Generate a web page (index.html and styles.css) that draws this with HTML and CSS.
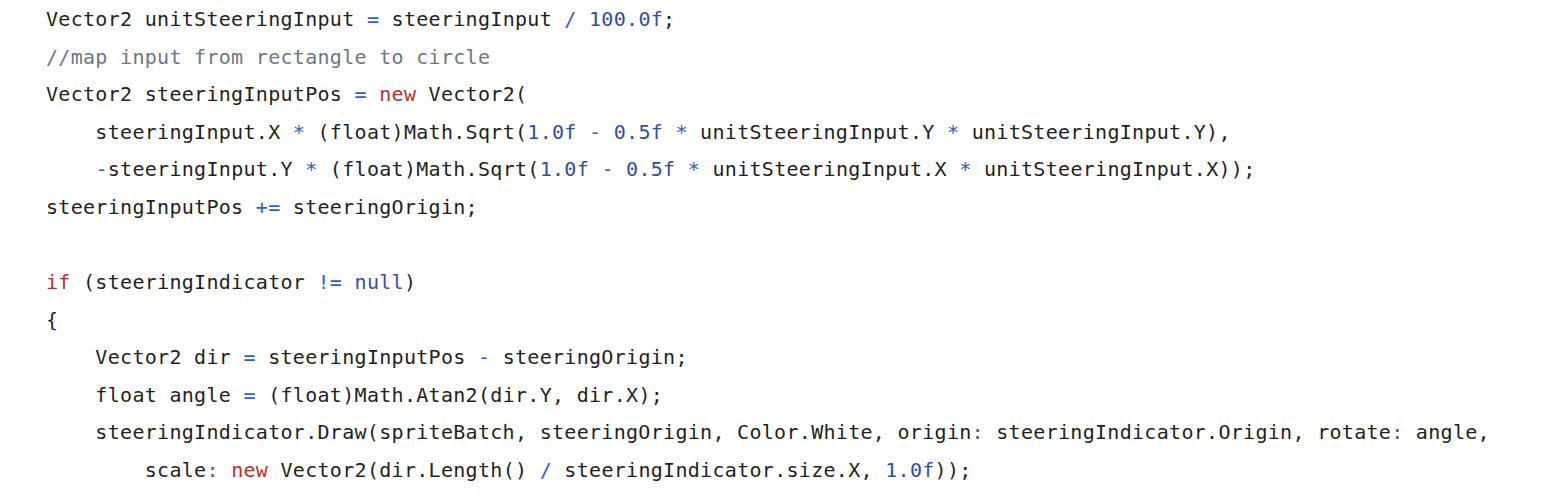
FILE: index.html
```html
<!DOCTYPE html>
<html>
<head>
<meta charset="utf-8">
<link rel="stylesheet" href="styles.css">
</head>
<body>
<pre class="code"><code><span class="line">Vector2 unitSteeringInput <span class="op">=</span> steeringInput <span class="op">/</span> <span class="num">100.0f</span>;</span>
<span class="line"><span class="cm">//map input from rectangle to circle</span></span>
<span class="line">Vector2 steeringInputPos <span class="op">=</span> <span class="kw">new</span> Vector2(</span>
<span class="line">    steeringInput.X <span class="op">*</span> (float)Math.Sqrt(<span class="num">1.0f</span> <span class="op">-</span> <span class="num">0.5f</span> <span class="op">*</span> unitSteeringInput.Y <span class="op">*</span> unitSteeringInput.Y),</span>
<span class="line">    <span class="op">-</span>steeringInput.Y <span class="op">*</span> (float)Math.Sqrt(<span class="num">1.0f</span> <span class="op">-</span> <span class="num">0.5f</span> <span class="op">*</span> unitSteeringInput.X <span class="op">*</span> unitSteeringInput.X));</span>
<span class="line">steeringInputPos <span class="op">+=</span> steeringOrigin;</span>
<span class="line"> </span>
<span class="line"><span class="kw">if</span> (steeringIndicator <span class="op">!=</span> <span class="lit">null</span>)</span>
<span class="line">{</span>
<span class="line">    Vector2 dir <span class="op">=</span> steeringInputPos <span class="op">-</span> steeringOrigin;</span>
<span class="line">    float angle <span class="op">=</span> (float)Math.Atan2(dir.Y, dir.X);</span>
<span class="line">    steeringIndicator.Draw(spriteBatch, steeringOrigin, Color.White, origin<span class="col">:</span> steeringIndicator.Origin, rotate<span class="col">:</span> angle,</span>
<span class="line">        scale<span class="col">:</span> <span class="kw">new</span> Vector2(dir.Length() <span class="op">/</span> steeringIndicator.size.X, <span class="num">1.0f</span>));</span></code></pre>
</body>
</html>
```

FILE: styles.css
```css
html, body {
  margin: 0;
  padding: 0;
  background: #ffffff;
}

.code {
  margin: 0;
  padding: 1px 0 0 46px;
  font-family: "DejaVu Sans Mono", "Liberation Mono", monospace;
  font-size: 20px;
  letter-spacing: 0.3px;
  line-height: 37.58px;
  color: #1f1f1f;
  white-space: pre;
}

.code code {
  font-family: inherit;
  display: flex;
  flex-direction: column;
}

.line {
  display: block;
  height: 37.58px;
}

.kw { color: #b8312e; }
.num { color: #2f4ea8; }
.op { color: #2f5ec4; }
.lit { color: #3550b0; }
.cm { color: #6e7781; }
.col { color: #4b5f86; }
```
